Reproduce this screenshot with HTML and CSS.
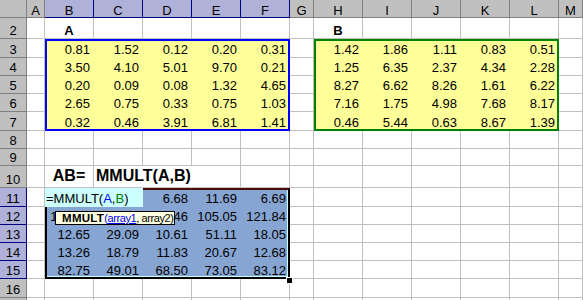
FILE: index.html
```html
<!DOCTYPE html>
<html>
<head>
<meta charset="utf-8">
<link rel="stylesheet" href="styles.css">
</head>
<body>
<div class="sheet">
  <div class="layer under">
    <div class="range-a"></div>
    <div class="range-b"></div>
    <div class="selection"></div>
  </div>
  <div class="layer cells">
    <div class="corner"></div><div class="h">A</div><div class="h s">B</div><div class="h s">C</div><div class="h s">D</div><div class="h s">E</div><div class="h s">F</div><div class="h">G</div><div class="h">H</div><div class="h">I</div><div class="h">J</div><div class="h">K</div><div class="h">L</div><div class="h">M</div>

    <div class="rh">2</div><div class="c"></div><div class="c ctr lbl">A</div><div class="c"></div><div class="c"></div><div class="c"></div><div class="c"></div><div class="c"></div><div class="c ctr lbl">B</div><div class="c"></div><div class="c"></div><div class="c"></div><div class="c"></div><div class="c"></div>

    <div class="rh">3</div><div class="c"></div><div class="c f n">0.81</div><div class="c f n">1.52</div><div class="c f n">0.12</div><div class="c f n">0.20</div><div class="c f n">0.31</div><div class="c"></div><div class="c f n">1.42</div><div class="c f n">1.86</div><div class="c f n">1.11</div><div class="c f n">0.83</div><div class="c f n">0.51</div><div class="c"></div>

    <div class="rh">4</div><div class="c"></div><div class="c f n">3.50</div><div class="c f n">4.10</div><div class="c f n">5.01</div><div class="c f n">9.70</div><div class="c f n">0.21</div><div class="c"></div><div class="c f n">1.25</div><div class="c f n">6.35</div><div class="c f n">2.37</div><div class="c f n">4.34</div><div class="c f n">2.28</div><div class="c"></div>

    <div class="rh">5</div><div class="c"></div><div class="c f n">0.20</div><div class="c f n">0.09</div><div class="c f n">0.08</div><div class="c f n">1.32</div><div class="c f n">4.65</div><div class="c"></div><div class="c f n">8.27</div><div class="c f n">6.62</div><div class="c f n">8.26</div><div class="c f n">1.61</div><div class="c f n">6.22</div><div class="c"></div>

    <div class="rh">6</div><div class="c"></div><div class="c f n">2.65</div><div class="c f n">0.75</div><div class="c f n">0.33</div><div class="c f n">0.75</div><div class="c f n">1.03</div><div class="c"></div><div class="c f n">7.16</div><div class="c f n">1.75</div><div class="c f n">4.98</div><div class="c f n">7.68</div><div class="c f n">8.17</div><div class="c"></div>

    <div class="rh">7</div><div class="c"></div><div class="c f n">0.32</div><div class="c f n">0.46</div><div class="c f n">3.91</div><div class="c f n">6.81</div><div class="c f n">1.41</div><div class="c"></div><div class="c f n">0.46</div><div class="c f n">5.44</div><div class="c f n">0.63</div><div class="c f n">8.67</div><div class="c f n">1.39</div><div class="c"></div>

    <div class="rh">8</div><div class="c"></div><div class="c"></div><div class="c"></div><div class="c"></div><div class="c"></div><div class="c"></div><div class="c"></div><div class="c"></div><div class="c"></div><div class="c"></div><div class="c"></div><div class="c"></div><div class="c"></div>

    <div class="rh">9</div><div class="c"></div><div class="c"></div><div class="c"></div><div class="c"></div><div class="c"></div><div class="c"></div><div class="c"></div><div class="c"></div><div class="c"></div><div class="c"></div><div class="c"></div><div class="c"></div><div class="c"></div>

    <div class="rh">10</div><div class="c"></div><div class="c ctr big">AB=</div><div class="c big nr lead">MMULT(A,B)</div><div class="c nr"></div><div class="c"></div><div class="c"></div><div class="c"></div><div class="c"></div><div class="c"></div><div class="c"></div><div class="c"></div><div class="c"></div><div class="c"></div>

    <div class="rh s">11</div><div class="c"></div><div class="c f"></div><div class="c f"></div><div class="c f n">6.68</div><div class="c f n">11.69</div><div class="c f n">6.69</div><div class="c"></div><div class="c"></div><div class="c"></div><div class="c"></div><div class="c"></div><div class="c"></div><div class="c"></div>

    <div class="rh s">12</div><div class="c"></div><div class="c f n">121.08</div><div class="c f n">83.83</div><div class="c f n">103.46</div><div class="c f n">105.05</div><div class="c f n">121.84</div><div class="c"></div><div class="c"></div><div class="c"></div><div class="c"></div><div class="c"></div><div class="c"></div><div class="c"></div>

    <div class="rh s">13</div><div class="c"></div><div class="c f n">12.65</div><div class="c f n">29.09</div><div class="c f n">10.61</div><div class="c f n">51.11</div><div class="c f n">18.05</div><div class="c"></div><div class="c"></div><div class="c"></div><div class="c"></div><div class="c"></div><div class="c"></div><div class="c"></div>

    <div class="rh s">14</div><div class="c"></div><div class="c f n">13.26</div><div class="c f n">18.79</div><div class="c f n">11.83</div><div class="c f n">20.67</div><div class="c f n">12.68</div><div class="c"></div><div class="c"></div><div class="c"></div><div class="c"></div><div class="c"></div><div class="c"></div><div class="c"></div>

    <div class="rh s">15</div><div class="c"></div><div class="c f n">82.75</div><div class="c f n">49.01</div><div class="c f n">68.50</div><div class="c f n">73.05</div><div class="c f n">83.12</div><div class="c"></div><div class="c"></div><div class="c"></div><div class="c"></div><div class="c"></div><div class="c"></div><div class="c"></div>

    <div class="rh">16</div><div class="c"></div><div class="c"></div><div class="c"></div><div class="c"></div><div class="c"></div><div class="c"></div><div class="c"></div><div class="c"></div><div class="c"></div><div class="c"></div><div class="c"></div><div class="c"></div><div class="c"></div>

    <div class="rh"></div><div class="c"></div><div class="c"></div><div class="c"></div><div class="c"></div><div class="c"></div><div class="c"></div><div class="c"></div><div class="c"></div><div class="c"></div><div class="c"></div><div class="c"></div><div class="c"></div><div class="c"></div>
  </div>
  <div class="layer over">
    <div class="editbox">=MMULT(<span class="ref-a">A</span>,<span class="ref-b">B</span>)</div>
    <div class="tip"><b>MMULT</b><span class="args"><span class="cur">(<u>array1</u></span>, array2)</span></div>
    <div class="handle"></div>
  </div>
</div>
</body>
</html>
```

FILE: styles.css
```css
* { box-sizing: border-box; }
html, body { margin: 0; padding: 0; background: #fff; }
body {
  width: 583px;
  height: 300px;
  overflow: hidden;
  font-family: "Liberation Sans", Arial, sans-serif;
  font-size: 13px;
  color: #000;
}
.sheet { display: grid; height: 300px; overflow: hidden; }
.layer {
  grid-area: 1 / 1;
  display: grid;
  grid-template-columns: 27px 18px repeat(5, 49px) 24px repeat(5, 49px) 24px;
  grid-template-rows: 18px 21px 19px 18px 18px 18px 19px 18px 17px 22px 19px 18px 18px 18px 18px 19px 18px;
}

/* cells */
.c {
  border-right: 1px solid #c0c0c0;
  border-bottom: 1px solid #c0c0c0;
  display: flex;
  align-items: flex-end;
  line-height: 15px;
  white-space: nowrap;
  min-width: 0;
}
.f { border-color: transparent; }
.nr { border-right-color: transparent; }
.n { justify-content: flex-end; padding-right: 3px; }
.ctr { justify-content: center; }
.lbl { font-weight: bold; }
.big { font-size: 16px; font-weight: bold; line-height: 18px; padding-bottom: 2px; }
.lead { padding-left: 2px; }

/* headers */
.corner, .h, .rh {
  background: #c0c0c0;
  border-right: 1px solid #808080;
  border-bottom: 1px solid #808080;
  display: flex;
  align-items: flex-end;
  justify-content: center;
}
.h { line-height: 13px; }
.rh { line-height: 15px; }
.s { background: #b0b1d9; border-color: #000080; }

/* fills below the cells */
.range-a {
  grid-row: 3 / 8;
  grid-column: 3 / 8;
  background: #ffff99;
  border: 2px solid #0000ff;
}
.range-b {
  grid-row: 3 / 8;
  grid-column: 9 / 14;
  background: #ffff99;
  border: 2px solid #008000;
}
.selection {
  grid-row: 11 / 16;
  grid-column: 3 / 8;
  background: #87a5d3;
  border: 2px solid #000;
  border-top-color: #4b0c0c;
  box-shadow: inset -1px -1px 0 #c8ffff;
}

/* things on top */
.editbox {
  grid-row: 11;
  grid-column: 3 / 5;
  background: #ccffff;
  display: flex;
  align-items: flex-end;
  line-height: 15px;
  padding: 0 0 1px 1px;
  white-space: nowrap;
}
.ref-a { color: #0000ff; }
.ref-b { color: #008000; }

.tip {
  grid-row: 12;
  grid-column: 3 / 6;
  justify-self: start;
  align-self: start;
  margin: 4px 0 0 10px;
  width: 120px;
  height: 14px;
  background: #ffffe1;
  border: 1px solid #000;
  padding-left: 6px;
  font-size: 11.5px;
  line-height: 12px;
  white-space: nowrap;
}
.tip b { letter-spacing: 0.3px; }
.args { font-size: 11px; letter-spacing: -0.4px; }
.cur { color: #0000ff; }

.handle {
  grid-row: 15;
  grid-column: 7;
  justify-self: end;
  align-self: end;
  width: 7px;
  height: 7px;
  margin: 0 -3px -5px 0;
  background: #000;
  border: 1px solid #fff;
}
```
